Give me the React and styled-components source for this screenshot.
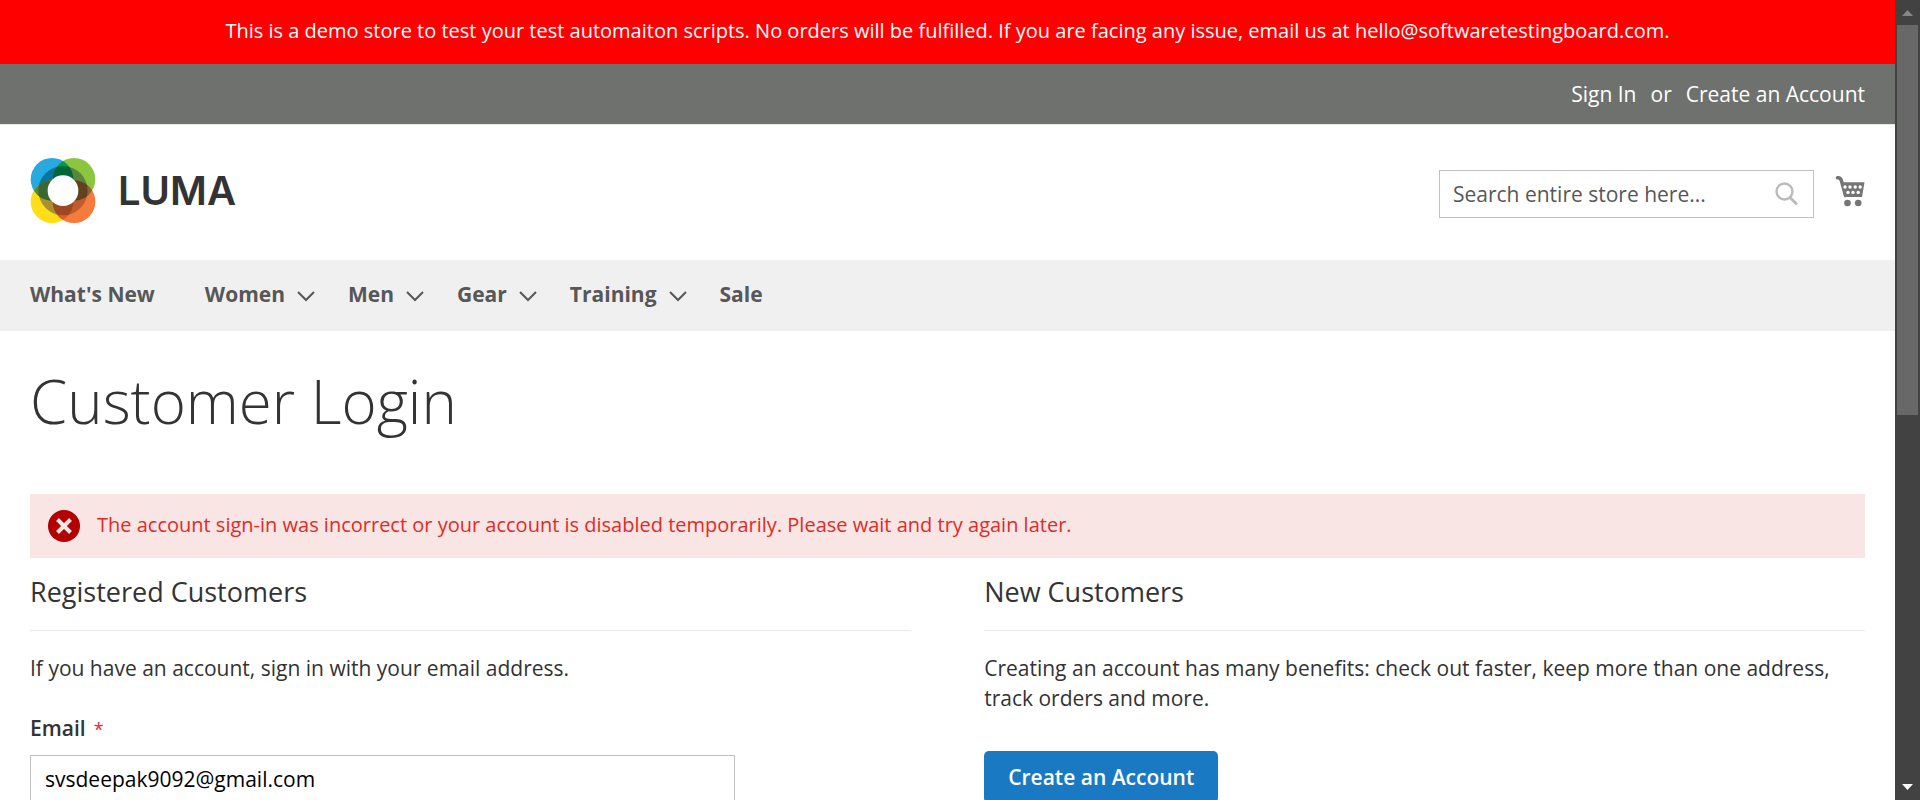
import React from 'react';
import styled, { createGlobalStyle } from 'styled-components';

const GlobalStyle = createGlobalStyle`
  *, *::before, *::after { box-sizing: border-box; }
  body {
    margin: 0;
    background: #fff;
    color: #333;
    font-family: "Open Sans", "Noto Sans", sans-serif;
    font-size: 21px;
    line-height: 30px;
  }
  h1, h2, p { margin: 0; }
  a { color: inherit; text-decoration: none; }
`;

const Viewport = styled.div`
  display: grid;
  grid-template-columns: minmax(0, 1fr) 25px;
  height: 100vh;
  overflow: hidden;
`;

const Page = styled.div`
  min-width: 0;
`;

const Scrollbar = styled.div`
  display: flex;
  flex-direction: column;
  align-items: center;
  height: 100vh;
  padding: 10px 2px;
  background: #424242;
`;

const Thumb = styled.div`
  width: 100%;
  height: 50%;
  margin: 9px 0 auto;
  background: #686868;
`;

const Arrow = styled.svg`
  display: block;
  flex: none;
  width: 11px;
  height: 6px;
  fill: ${(p) => p.$color};
`;

const Notice = styled.p`
  padding: 16px 30px 18px;
  background: #f00;
  color: #fff;
  font-size: 20px;
  text-align: center;
`;

const TopPanel = styled.div`
  display: flex;
  justify-content: flex-end;
  padding: 15px 30px;
  gap: 14px;
  background: #6e716e;
  color: #fff;
`;

const Header = styled.header`
  display: flex;
  align-items: flex-start;
  justify-content: space-between;
  padding: 33px 30px 37px;
  border-top: 1px solid #e8e8e8;
`;

const Logo = styled.a`
  display: flex;
  align-items: center;
  gap: 22px;
  color: #333;
  font-family: Inter, sans-serif;
  font-size: 40px;
  font-weight: 600;
  line-height: 65px;

  svg { display: block; width: 66px; height: 65px; }
`;

const Tools = styled.div`
  display: flex;
  align-items: flex-start;
  gap: 21px;
  margin-top: 12px;
`;

const SearchBox = styled.form`
  display: flex;
  align-items: center;
  width: 375px;
  height: 48px;
  padding: 0 15px 0 13px;
  border: 1px solid #c2c2c2;
`;

const SearchInput = styled.input`
  flex: 1;
  min-width: 0;
  padding: 0;
  border: 0;
  outline: 0;
  background: none;
  font: inherit;
  &::placeholder { color: #575757; opacity: 1; }
`;

const IconButton = styled.button`
  display: block;
  padding: 0;
  border: 0;
  background: none;
  svg { display: block; }
`;

const CartButton = styled(IconButton)`
  margin-top: 5px;
`;

const Nav = styled.nav`
  display: flex;
  align-items: center;
  padding: 19px 30px 22px;
  background: #f0f0f0;
`;

const NavLink = styled.a`
  display: flex;
  align-items: center;
  gap: 12px;
  margin-right: ${(p) => (p.$menu ? 33 : 50)}px;
  color: #575757;
  font-weight: 700;

  svg { display: block; margin-top: 4px; }
`;

const Main = styled.main`
  padding: 37px 30px 0;
`;

const Title = styled.h1`
  margin-bottom: 60px;
  font-size: 60px;
  font-weight: 300;
  line-height: 66px;
`;

const ErrorMessage = styled.div`
  display: flex;
  align-items: center;
  gap: 17px;
  height: 64px;
  padding: 0 18px;
  background: #fae5e5;
  color: #e02b27;
  font-size: 20px;

  svg { display: block; flex: none; }
  p { padding-bottom: 3px; }
`;

const Columns = styled.div`
  display: grid;
  grid-template-columns: 48fr 48fr;
  column-gap: 4%;
  margin-top: 18px;
`;

const BlockTitle = styled.h2`
  padding-bottom: 22px;
  margin-bottom: 22px;
  border-bottom: 1px solid #e8e8e8;
  font-size: 27px;
  font-weight: 400;
  line-height: 32px;
`;

const Label = styled.label`
  display: block;
  margin: 30px 0 11px;
  font-weight: 600;

  span { margin-left: 8px; color: #e02b27; font-size: 18px; font-weight: 400; }
`;

const TextInput = styled.input`
  display: block;
  width: 80%;
  height: 48px;
  padding: 0 14px;
  border: 1px solid #c2c2c2;
  color: #000;
  font: inherit;
`;

const PrimaryButton = styled.a`
  display: inline-block;
  margin-top: 38px;
  padding: 11px 24px;
  border-radius: 5px;
  background: #1979c3;
  color: #fff;
  font-weight: 600;
`;

const Rings = () => (
  <svg viewBox="93 114 196 195" aria-hidden="true">
    <defs>
      <clipPath id="blue"><circle cx="158" cy="178" r="64" /></clipPath>
      <clipPath id="yellow"><circle cx="158" cy="245" r="64" /></clipPath>
      <clipPath id="green"><circle cx="224" cy="178" r="64" /></clipPath>
      <clipPath id="ring"><circle cx="191" cy="212" r="74" /></clipPath>
    </defs>
    <circle cx="158" cy="178" r="64" fill="#27a9e1" />
    <circle cx="224" cy="178" r="64" fill="#8cc63f" />
    <circle cx="158" cy="245" r="64" fill="#ffde17" />
    <circle cx="224" cy="245" r="64" fill="#f47b3b" />
    <circle cx="224" cy="178" r="64" fill="#00994d" clipPath="url(#blue)" />
    <circle cx="158" cy="245" r="64" fill="#4f8a3c" clipPath="url(#blue)" />
    <circle cx="224" cy="245" r="64" fill="#e05a25" clipPath="url(#yellow)" />
    <circle cx="224" cy="245" r="64" fill="#8c6239" clipPath="url(#green)" />
    <g clipPath="url(#ring)">
      <circle cx="158" cy="178" r="64" fill="#0a759c" />
      <circle cx="224" cy="178" r="64" fill="#59853d" />
      <circle cx="158" cy="245" r="64" fill="#a8922f" />
      <circle cx="224" cy="245" r="64" fill="#c05b2c" />
      <circle cx="224" cy="178" r="64" fill="#006837" clipPath="url(#blue)" />
      <circle cx="158" cy="245" r="64" fill="#3b6731" clipPath="url(#blue)" />
      <circle cx="224" cy="245" r="64" fill="#9f4722" clipPath="url(#yellow)" />
      <circle cx="224" cy="245" r="64" fill="#62421d" clipPath="url(#green)" />
    </g>
    <circle cx="191" cy="212" r="46" fill="#fff" />
  </svg>
);

const Chevron = () => (
  <svg width="18" height="11" viewBox="0 0 18 11" fill="none" stroke="#575757" strokeWidth="2" aria-hidden="true">
    <path d="M1 1l8 8 8-8" />
  </svg>
);

const SearchIcon = () => (
  <svg width="23" height="24" viewBox="0 0 23 24" fill="none" stroke="#bbb" aria-hidden="true">
    <circle cx="9.5" cy="9.5" r="8" strokeWidth="2.4" />
    <path d="M15 15.5l6 6" strokeWidth="3" strokeLinecap="round" />
  </svg>
);

const CartIcon = () => (
  <svg width="30" height="32" viewBox="0 0 30 32" fill="none" aria-hidden="true">
    <path d="M2.500 2.800Q5.500 2.300 6.500 6L10.500 20.500" stroke="#757575" strokeWidth="3.600" strokeLinecap="round" />
    <path d="M6.500 7.300H29.500L27 22H10z" fill="#757575" />
    <g fill="#757575">
      <circle cx="12.500" cy="28" r="3.300" />
      <circle cx="23.200" cy="28" r="3.300" />
    </g>
    <g fill="#fff">
      <circle cx="10" cy="12" r="1.700" /><circle cx="15" cy="12" r="1.700" />
      <circle cx="20.200" cy="12" r="1.700" /><circle cx="25.200" cy="12" r="1.700" />
      <circle cx="13" cy="17.400" r="1.700" /><circle cx="18" cy="17.400" r="1.700" />
      <circle cx="23.200" cy="17.400" r="1.700" />
    </g>
  </svg>
);

const ErrorIcon = () => (
  <svg width="32" height="32" viewBox="0 0 32 32" aria-hidden="true">
    <circle cx="16" cy="16" r="16" fill="#b30000" />
    <path d="M9.500 9.500l13 13M22.500 9.500l-13 13" stroke="#fae5e5" strokeWidth="4" />
  </svg>
);

const navItems = [
  ['What\'s New', false],
  ['Women', true],
  ['Men', true],
  ['Gear', true],
  ['Training', true],
  ['Sale', false],
];

export default function App() {
  return (
    <>
      <GlobalStyle />
      <Viewport>
        <Page>
          <Notice>
            This is a demo store to test your test automaiton scripts. No orders will be fulfilled. If you are facing any issue, email us at hello@softwaretestingboard.com.
          </Notice>
          <TopPanel>
            <a href="#signin">Sign In</a>
            <span>or</span>
            <a href="#create">Create an Account</a>
          </TopPanel>
          <Header>
            <Logo href="#home"><Rings />LUMA</Logo>
            <Tools>
              <SearchBox>
                <SearchInput type="text" aria-label="Search" placeholder="Search entire store here..." />
                <IconButton type="submit" aria-label="Search"><SearchIcon /></IconButton>
              </SearchBox>
              <CartButton type="button" aria-label="My Cart"><CartIcon /></CartButton>
            </Tools>
          </Header>
          <Nav>
            {navItems.map(([name, menu]) => (
              <NavLink key={name} href="#menu" $menu={menu}>
                {name}
                {menu && <Chevron />}
              </NavLink>
            ))}
          </Nav>
          <Main>
            <Title>Customer Login</Title>
            <ErrorMessage role="alert">
              <ErrorIcon />
              <p>The account sign-in was incorrect or your account is disabled temporarily. Please wait and try again later.</p>
            </ErrorMessage>
            <Columns>
              <section>
                <BlockTitle>Registered Customers</BlockTitle>
                <p>If you have an account, sign in with your email address.</p>
                <Label htmlFor="email">Email<span>*</span></Label>
                <TextInput id="email" type="email" defaultValue="svsdeepak9092@gmail.com" />
              </section>
              <section>
                <BlockTitle>New Customers</BlockTitle>
                <p>Creating an account has many benefits: check out faster, keep more than one address, track orders and more.</p>
                <PrimaryButton href="#create">Create an Account</PrimaryButton>
              </section>
            </Columns>
          </Main>
        </Page>
        <Scrollbar aria-hidden="true">
          <Arrow viewBox="0 0 11 6" $color="#868686"><path d="M0 6L5.500 0 11 6z" /></Arrow>
          <Thumb />
          <Arrow viewBox="0 0 11 6" $color="#fff"><path d="M0 0h11L5.500 6z" /></Arrow>
        </Scrollbar>
      </Viewport>
    </>
  );
}
